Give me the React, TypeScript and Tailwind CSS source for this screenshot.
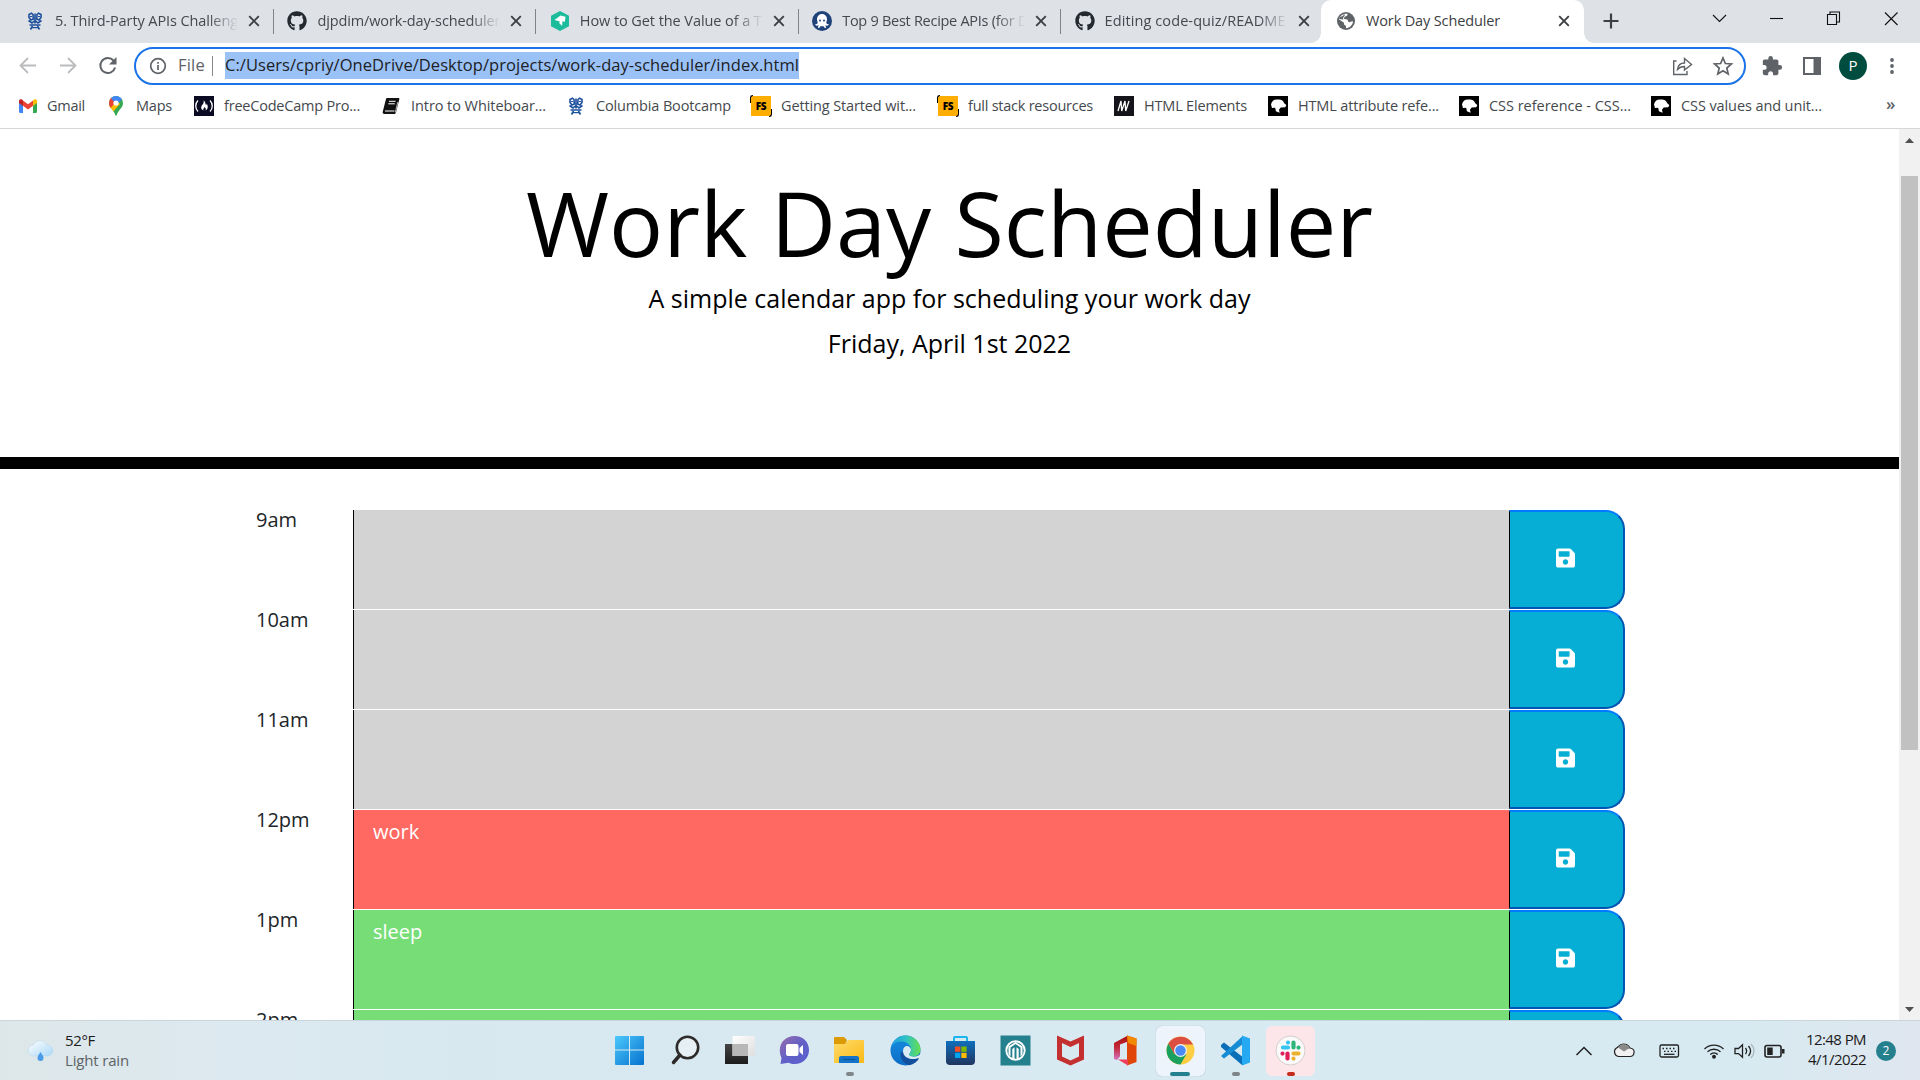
import React, { useLayoutEffect, useRef, useState } from "react";
import { FaGithub, FaSave } from "react-icons/fa";
import { MdExtension } from "react-icons/md";

/** Single line of text whose tracking is adjusted so that it fills `width` pixels. */
function Fit({ width, children, className = "" }: { width: number; children: string; className?: string }) {
  const ref = useRef<HTMLSpanElement>(null);
  const [spacing, setSpacing] = useState(0);
  useLayoutEffect(() => {
    if (ref.current) {
      const natural = ref.current.getBoundingClientRect().width;
      setSpacing((width - natural) / children.length);
    }
  }, [width, children]);
  return (
    <span ref={ref} className={"inline-block shrink-0 whitespace-pre " + className} style={{ letterSpacing: spacing + "px" }}>
      {children}
    </span>
  );
}

/* ---------- favicons ---------- */

const Crown = () => (
  <svg viewBox="0 0 16 20" className="h-5 w-4" fill="none" stroke="#1d4f9c" strokeWidth="1.6">
    <path d="M6 3.500 4.500 2.200 2 3.500v3l2 2.500 2.300-1zM10 3.500l1.500-1.300L14 3.500v3L12 9 9.700 8zM8 2.500v10M1.500 9.500 5 12 8 9.500 11 12l3.500-2.500M2.500 14h11M3.500 18.500l2-3.500M12.500 18.500l-2-3.500" />
    <path d="M3 5.500h2M11 5.500h2M5 16.700h6" strokeWidth="1.200" />
  </svg>
);
const Hexagon = () => (
  <svg viewBox="0 0 20 20" className="size-5">
    <path d="M10 0 19 4.800v10.400L10 20 1 15.200V4.800z" fill="#1bbc9b" />
    <path d="m4.500 9 6-4.500 5 1.200-.6 5-2.400-.4-.4 4.700-3-3 .8-1.500z" fill="#fff" />
  </svg>
);
const Octopus = () => (
  <svg viewBox="0 0 20 20" className="size-5">
    <circle cx="10" cy="10" r="10" fill="#1f4379" />
    <path d="M5 8a5 5 0 0 1 10 0c0 1.800-.8 2.700-.6 4 .2 1.200 1.400 1.300 2.600 1.300-.5 1.500-2.400 1.700-3.500.8l.5 2.700c-1 .5-2 0-2.200-1.500H8.200C8 16.800 7 17.300 6 16.800l.5-2.700c-1.100.9-3 .7-3.500-.8 1.200 0 2.400-.1 2.600-1.300C5.800 10.700 5 9.800 5 8z" fill="#fff" />
    <circle cx="8" cy="9.500" r="1" fill="#1f4379" />
    <circle cx="12" cy="9.500" r="1" fill="#1f4379" />
  </svg>
);
const Globe = () => (
  <svg viewBox="0 0 20 20" className="size-5">
    <circle cx="10" cy="10" r="9" fill="#5f6368" />
    <path d="M11.500 2.800c.3 1.800-.8 2.300-2 2.500-.5 1.200-1.800.8-1.600 2.300.1 1 2.700.3 3.600 1.200.7.8.3 2.200 1.700 2.400 1.300.1 1.200-1 3.800-1-.2 3.800-3.300 6.800-7 7 0-1.200.2-2.400-.8-2.900-1.200-.5-1.300-1.300-1.200-2.600L2.900 8.200C3.600 5.200 7 2.300 11.500 2.800z" fill="#fff" />
    <path d="M4.500 5.500c1.500.2 2.800-.4 3.500-2.500 1 .4.900 1.600.2 2.400-1.500.8-1.200 2-.9 3.200L3 8z" fill="#5f6368" />
  </svg>
);
const Gmail = () => (
  <svg viewBox="0 0 18 14" className="h-3.500 w-[18px]">
    <path d="M0 2v10.800c0 .7.5 1.200 1.200 1.200H4V6z" fill="#4285f4" />
    <path d="M18 2v10.800c0 .7-.5 1.200-1.200 1.200H14V6z" fill="#34a853" />
    <path d="M4 1.400V6.800L9 10.500l5-3.700V1.400L9 5.200z" fill="#ea4335" />
    <path d="M0 2v2l4 2.900V1.400L3.300.8C2 -.3 0 .5 0 2z" fill="#c5221f" />
    <path d="M18 2v2l-4 2.900V1.400l.7-.6C16-.3 18 .5 18 2z" fill="#fbbc04" />
  </svg>
);
const Pin = () => (
  <svg viewBox="0 0 14 20" className="h-5 w-[14px]">
    <defs>
      <clipPath id="pin">
        <path d="M7 0a7 7 0 0 0-7 7c0 3 1.500 4.500 3.500 7 1.500 2 2.300 3.500 2.700 5 .2 1 1.400 1 1.600 0 .4-1.500 1.200-3 2.700-5C12.500 11.500 14 10 14 7a7 7 0 0 0-7-7z" />
      </clipPath>
    </defs>
    <g clipPath="url(#pin)">
      <path d="M0 0h14v20H0z" fill="#34a853" />
      <path d="M-2 11 7 3l4 5-8 9z" fill="#fbbc04" />
      <path d="M0 2 3 1.500l4 4.500-5.500 6L-1 9z" fill="#ea4335" />
      <path d="M2 2 4-1h9l.5 3.500L8.500 8 5 6z" fill="#4285f4" />
    </g>
    <circle cx="7" cy="7" r="2.600" fill="#fff" />
  </svg>
);
const FreeCode = () => (
  <svg viewBox="0 0 20 20" className="size-5">
    <path d="M0 0h20v20H0z" fill="#0a0a23" />
    <path d="M4 4.500c-3 3-3 8 0 11M16 4.500c3 3 3 8 0 11" fill="none" stroke="#fff" strokeWidth="1.300" />
    <path d="M9.500 4.500c2.500 1.500 1.500 3.500 2.600 4.500.6-.2.600-.9.400-1.400 1.500 1.600 2.200 5.400-1 7 .7-1.500.2-2.600-1-3.600-.2 1.500-1.800 1.500-1 3.600-3.600-1.500-2.200-4.600-.9-6 .8-1 1.500-2.200.9-4.100z" fill="#fff" />
  </svg>
);
const Book = () => (
  <svg viewBox="0 0 18 18" className="size-[18px]">
    <path d="M5 1h11.500c.7 0 1 .5.8 1.200L14 15.500c-.2.900-.8 1.500-1.700 1.500H2.500C1 17 .3 15.800.8 14.500L4 2c.2-.6.500-1 1-1z" fill="#111" />
    <path d="M7 4.300h6.500M6.300 6.800h6.500M3 14h9.500" stroke="#fff" strokeWidth="1" />
    <path d="m15.800 5-2.500 10.500" stroke="#fff" strokeWidth=".7" />
  </svg>
);
const FullStack = () => (
  <div className="relative flex size-5 items-center justify-center bg-[#ffae00] text-[10px] font-extrabold tracking-[-0.4px] text-black">
    FS
    <span className="absolute -top-px -left-px h-2 w-[3px] rounded-tl-sm border-t border-l-[1.500px] border-black" />
    <span className="absolute -right-px -bottom-px h-2 w-[3px] rounded-br-sm border-r-[1.500px] border-b border-black" />
  </div>
);
const MdnM = () => (
  <svg viewBox="0 0 20 20" className="size-5">
    <path d="M0 0h20v20H0z" fill="#15141a" />
    <path d="m4 15 3-10 .7 10 3.300-10 .7 10L15 5" fill="none" stroke="#fff" strokeWidth="1.300" />
  </svg>
);
const MdnDino = () => (
  <svg viewBox="0 0 20 20" className="size-5">
    <path d="M0 0h20v20H0z" fill="#000" />
    <path d="M3 8.500C3.500 5 6.500 3 9.500 3.500c3.500-.5 6 1 6.700 3.700L18.300 9l-1 2.300-4.600.2-1.700 2.300.6 3-3.700-1.600-.7-3.400-3.200.3z" fill="#fff" />
  </svg>
);

/* ---------- browser chrome ---------- */

const tabs = [
  { title: "5. Third-Party APIs Challeng", icon: <Crown />, width: 183 },
  { title: "djpdim/work-day-scheduler", icon: <FaGithub className="size-5 text-[#24292f]" />, width: 183 },
  { title: "How to Get the Value of a T", icon: <Hexagon />, width: 182 },
  { title: "Top 9 Best Recipe APIs (for D", icon: <Octopus />, width: 186 },
  { title: "Editing code-quiz/README", icon: <FaGithub className="size-5 text-[#24292f]" />, width: 181 },
];

const Close = () => (
  <svg viewBox="0 0 12 12" className="size-3 shrink-0" stroke="#3c4043" strokeWidth="1.900">
    <path d="m1.200 1.200 9.600 9.600M10.800 1.200l-9.600 9.600" />
  </svg>
);

function TabStrip() {
  return (
    <div className="flex h-[43px] bg-[#dee1e6] text-[14.500px] text-[#45494d]">
      <div className="flex w-[1321px] pl-[12px]">
        {tabs.map((t, i) => (
          <div key={i} className="flex h-[42px] w-[262.400px] shrink-0 items-center pl-[13px]">
            <div className="flex w-5 shrink-0 justify-center">{t.icon}</div>
            <div className="ml-[10px] w-[183px] shrink-0 whitespace-nowrap [mask-image:linear-gradient(to_right,black_84%,transparent)]">
              <Fit width={t.width}>{t.title}</Fit>
            </div>
            <div className="ml-[10px]"><Close /></div>
            {i < 4 && <div className="ml-[13px] h-[25px] w-px bg-[#808387]" />}
          </div>
        ))}
      </div>
      <div className="relative flex w-[263px] items-center rounded-t-[10px] bg-white pr-[14px] pb-px pl-[15px] text-[#3c4043]">
        <span className="absolute bottom-0 -left-[10px] size-[10px] bg-[radial-gradient(circle_at_0_0,transparent_9.500px,white_10px)]" />
        <span className="absolute -right-[10px] bottom-0 size-[10px] bg-[radial-gradient(circle_at_100%_0,transparent_9.500px,white_10px)]" />
        <Globe />
        <Fit width={134} className="ml-[10px]">Work Day Scheduler</Fit>
        <div className="ml-auto"><Close /></div>
      </div>
      <div className="flex flex-1 items-start">
        <svg viewBox="0 0 336 43" className="h-[43px] w-[336px]" fill="none" stroke="#111" strokeWidth="1.100">
          <path d="M27 13.500v15M19.500 21h15" stroke="#3c4043" strokeWidth="2.200" />
          <path d="m129 15 6.500 6.500L142 15" />
          <path d="M186 18.500h13" />
          <path d="M243.500 14.500h9v10h-9zM246 14v-2h9.500v10H253" />
          <path d="m301 12.500 12.500 12.500M313.500 12.500 301 25" />
        </svg>
      </div>
    </div>
  );
}

function Toolbar() {
  return (
    <div className="flex h-[45px] items-center bg-white text-[16.500px]">
      <svg viewBox="0 0 134 45" className="h-[45px] w-[134px] shrink-0" fill="none" strokeWidth="1.800">
        <path d="M36 22.500H20.500M28 15l-7.500 7.500L28 30" stroke="#babcbe" />
        <path d="M60 22.500h15.500M68 15l7.500 7.500L68 30" stroke="#babcbe" />
        <path d="M113.500 17.500a7.500 7.500 0 1 0 1.600 7" stroke="#5f6368" strokeWidth="2" />
        <path d="M116.500 14v7.500H109z" fill="#5f6368" />
      </svg>
      <div className="flex h-[38px] w-[1612px] shrink-0 items-center rounded-full border-[2.500px] border-[#1a73e8] pl-[13px] text-[#202124]">
        <svg viewBox="0 0 18 18" className="size-[18px]" fill="none" stroke="#5f6368" strokeWidth="1.700">
          <circle cx="9" cy="9" r="7.300" />
          <path d="M9 8v5M9 5v1.800" />
        </svg>
        <Fit width={27} className="ml-[11px] text-[#5f6368]">File</Fit>
        <div className="ml-[7px] h-5 w-px bg-[#85888c]" />
        <div className="ml-[12px] flex h-[27px] items-center bg-[#9ac2f7]">
          <Fit width={574}>C:/Users/cpriy/OneDrive/Desktop/projects/work-day-scheduler/index.html</Fit>
        </div>
        <svg viewBox="0 0 72 24" className="mr-[3px] ml-auto h-6 w-[72px]" fill="none" stroke="#5f6368" strokeWidth="1.400">
          <path d="M7.500 7H4.700v13.500H18V17" />
          <path d="M8.500 15.500c.5-4.500 3.500-6.500 7-6.500V4.500l7 6-7 5.500v-3.500c-3 0-5 .8-7 3z" />
          <path d="m54 4 2.400 5.500 6 .5-4.600 4 1.400 6-5.200-3.200L48.800 20l1.400-6-4.600-4 6-.5z" strokeWidth="1.700" />
        </svg>
      </div>
      <div className="flex flex-1 items-center text-[#5f6368]">
        <MdExtension className="ml-[15px] size-[22px]" />
        <svg viewBox="0 0 18 18" className="ml-[20px] size-[18px]">
          <path d="M1 1h16v16H1z" fill="none" stroke="#5f6368" strokeWidth="2" />
          <path d="M10.500 1H17v16h-6.500z" fill="#5f6368" />
        </svg>
        <div className="ml-[18px] flex size-7 items-center justify-center rounded-full bg-[#004d40] text-[15px] text-white">P</div>
        <svg viewBox="0 0 4 18" className="ml-[23px] h-[18px] w-1" fill="#5f6368">
          <circle cx="2" cy="3" r="1.900" /><circle cx="2" cy="9" r="1.900" /><circle cx="2" cy="15" r="1.900" />
        </svg>
      </div>
    </div>
  );
}

const bookmarks = [
  { box: "w-[90px]", icon: <Gmail />, gap: "ml-[10px]", text: "Gmail", width: 38 },
  { box: "w-[85px]", icon: <Pin />, gap: "ml-[13px]", text: "Maps", width: 36 },
  { box: "w-[188px]", icon: <FreeCode />, gap: "ml-[10px]", text: "freeCodeCamp Pro...", width: 136 },
  { box: "w-[186px]", icon: <Book />, gap: "ml-[11px]", text: "Intro to Whiteboar...", width: 135 },
  { box: "w-[183px]", icon: <Crown />, gap: "ml-[12px]", text: "Columbia Bootcamp", width: 135 },
  { box: "w-[187px]", icon: <FullStack />, gap: "ml-[10px]", text: "Getting Started wit...", width: 135 },
  { box: "w-[176px]", icon: <FullStack />, gap: "ml-[10px]", text: "full stack resources", width: 125 },
  { box: "w-[154px]", icon: <MdnM />, gap: "ml-[10px]", text: "HTML Elements", width: 103 },
  { box: "w-[191px]", icon: <MdnDino />, gap: "ml-[10px]", text: "HTML attribute refe...", width: 141 },
  { box: "w-[192px]", icon: <MdnDino />, gap: "ml-[10px]", text: "CSS reference - CSS...", width: 142 },
  { box: "w-[235px]", icon: <MdnDino />, gap: "ml-[10px]", text: "CSS values and unit...", width: 141 },
];

function Bookmarks() {
  return (
    <div className="flex h-[41px] items-center border-b border-[#d5d7da] bg-white pb-[4px] pl-[19px] text-[14.500px] text-[#45494d]">
      {bookmarks.map((b, i) => (
        <div key={i} className={"flex shrink-0 items-center " + b.box}>
          {b.icon}
          <Fit width={b.width} className={b.gap}>{b.text}</Fit>
        </div>
      ))}
      <span className="pb-1 text-[17px] font-semibold text-[#5f6368]">»</span>
    </div>
  );
}

/* ---------- page ---------- */

const hours = [
  { time: "9am", text: "", color: "bg-[#d3d3d3]" },
  { time: "10am", text: "", color: "bg-[#d3d3d3]" },
  { time: "11am", text: "", color: "bg-[#d3d3d3]" },
  { time: "12pm", text: "work", color: "bg-[#ff6961]" },
  { time: "1pm", text: "sleep", color: "bg-[#77dd77]" },
  { time: "2pm", text: "", color: "bg-[#77dd77]" },
];

function Page() {
  return (
    <div className="flex h-[891px] overflow-hidden bg-white">
      <main className="w-[1899px] shrink-0">
        <header className="h-[340px] border-b-[12px] border-black pt-[39px] text-center text-black">
          <h1 className="text-[90px] leading-[108px]">Work Day Scheduler</h1>
          <p className="mt-[3px] text-[25px] leading-[38px]">A simple calendar app for scheduling your work day</p>
          <p className="mt-[7px] text-[25px] leading-[38px]">Friday, April 1st 2022</p>
        </header>
        <section className="pt-[41px] pl-[256px] text-[20px] text-[#212529]">
          {hours.map((h) => (
            <div key={h.time} className="mb-px flex h-[99px]">
              <div className="w-[97px] leading-[20px]">{h.time}</div>
              <div className={"w-[1156px] border-l border-black pt-[7px] pl-[19px] leading-[30px] text-white " + h.color}>{h.text}</div>
              <button className="flex w-[116px] items-center justify-center rounded-r-[19px] border-2 border-l border-t-[#007bff] border-r-[#0056b3] border-b-[#0056b3] border-l-black bg-[#06aed5] pb-[3px] text-white">
                <FaSave className="mr-[2px] h-[22px] w-[19px]" />
              </button>
            </div>
          ))}
        </section>
      </main>
      <div className="flex w-[21px] flex-col items-center bg-[#f1f1f1]">
        <svg viewBox="0 0 21 47" className="h-[47px] w-[21px] shrink-0"><path d="m6 14 4.500-5 4.500 5z" fill="#505050" /></svg>
        <div className="h-[574px] w-[17px] shrink-0 bg-[#c1c1c1]" />
        <svg viewBox="0 0 21 21" className="mt-auto h-[21px] w-[21px] shrink-0"><path d="m6 8 4.500 5L15 8z" fill="#505050" /></svg>
      </div>
    </div>
  );
}

/* ---------- taskbar ---------- */

const appIcons: { box: string; dot?: string; art: React.ReactNode }[] = [
  { box: "", art: (
    <g fill="url(#win)"><path d="M1 2q0-1 1-1h13v13.500H1zM16 1h13q1 0 1 1v12.500H16zM1 15.500h14V30H2q-1 0-1-1zM16 15.500h14V29q0 1-1 1H16z" /></g>) },
  { box: "", art: (
    <g fill="none" stroke="#2d2a29"><circle cx="18.500" cy="12.500" r="10.700" fill="#e6eff3" strokeWidth="2.600" /><path d="m11 20-6.500 7.500" strokeWidth="3.500" strokeLinecap="round" /></g>) },
  { box: "", art: (
    <g><path d="M1 9h23v20H1z" fill="url(#dark)" /><path d="M8.500 1H31v20H8.500z" fill="url(#pale)" /><path d="M8.500 9H24v12H8.500z" fill="#b7b7b7" /></g>) },
  { box: "", art: (
    <g><path d="M15.500 1C24 1 30 7 30 15s-6 14-14.500 14c-2.500 0-4-.5-6-1.300L1.500 29l1-6C-2.500 12 4 1 15.500 1z" fill="url(#chat)" /><rect x="7" y="9" width="12.500" height="12" rx="2" fill="#fff" /><path d="m20.500 13 3.500-3v10l-3.500-3z" fill="#fff" /></g>) },
  { box: "", dot: "w-2 bg-[#7f868a]", art: (
    <g><path d="M0 3q0-1 1-1h9l3 3-2 5H0z" fill="#dc9b05" /><path d="M0 9h11l3-4h15q1 0 1 1v22H0z" fill="url(#folder)" /><path d="M5 28v-5q0-2 2-2h16q2 0 2 2v5z" fill="#1373c8" /><path d="M9 24.500h12" stroke="#0b559d" strokeWidth="1.200" /></g>) },
  { box: "", art: (
    <g>
      <circle cx="15.500" cy="15.500" r="15" fill="url(#edge)" />
      <path d="M11 17c-1.500 5 1.500 11 8 13.200C24 29.500 28 26 29.200 22.800c-.4-.7-1.200-.4-2 0C20 25.500 14.500 22 13.500 17z" fill="#124f9c" />
      <path d="M13 15.500c.3-3 2-4.500 4-4.500s4 1.700 4 4c0 2.500-1.500 3-1.500 4.300 0 1.700 3 2.200 5 2.200 2.500 0 4.500-1 6.500-2.500l1 2.500-2.500 2.500c-.5-1-1.500-1-2.500-.6C20 25.500 12.700 22 13 15.500z" fill="#d9eaf3" />
      <path d="M1 12C4 3.500 10 .5 15.500.5 24 .5 30.500 7 30.500 14.500c0 4.500-3.500 7-7.500 7-2.500 0-4-.8-4-2s2-2 2-5C21 10 16.500 6.500 11 6.500 6 6.500 2.500 9.500 1 12z" fill="url(#edgetop)" />
    </g>) },
  { box: "", art: (
    <g><path d="M9 7V3q0-1 1-1h11q1 0 1 1v4" fill="none" stroke="#19b5ee" strokeWidth="2" /><path d="M1 6h29v20q0 4-4 4H5q-4 0-4-4z" fill="url(#store)" /><path d="M10 11.500h5.300v5.300H10z" fill="#f25022" /><path d="M16.300 11.500h5.300v5.300h-5.300z" fill="#7fba00" /><path d="M10 17.800h5.300V23H10z" fill="#00a4ef" /><path d="M16.300 17.800h5.300V23h-5.300z" fill="#ffb900" /></g>) },
  { box: "", art: (
    <g><path d="M.5.500h30v30H.5z" fill="#25808d" /><circle cx="15.500" cy="15.500" r="9.200" fill="none" stroke="#fff" strokeWidth="1.900" /><path d="M8.500 11.500 15.500 7l7 4.500v8l-2 2V12.500L15.500 9l-5 3.500v9l-2-2zM12.300 14l2.200-1.700V24h-2.200zM16.500 12.300l2.200 1.700v10h-2.200z" fill="#fff" /></g>) },
  { box: "", art: (
    <path d="m2 .5 13.500 6L29 .5v24l-13.500 6L2 24.500zm5 7.500v13.500l8.500 4 8.500-4V8l-8.500 4z" fill="#c42f2f" fillRule="evenodd" />) },
  { box: "", art: (
    <g><path d="M4 8 18 .5v6L10 9.500v12l-3 3.500-3-1z" fill="url(#office)" /><path d="m17 .5 9.500 3v23.500l-9.500 3.500z" fill="#e0460a" /><path d="m17 .5 9.500 3V11L18 8z" fill="#f28900" /><path d="M8 24.500h10v6z" fill="#ef3e5b" /></g>) },
  { box: "rounded-md bg-[#edf4fb] shadow-[0_0_1px_#9ab]", dot: "w-5 bg-[#25808d]", art: (
    <g><circle cx="15.500" cy="15.500" r="14" fill="#ffce43" /><path d="M3.400 8.500A14 14 0 0 0 15.500 29.500l6-10.500H9.500z" fill="#1aa15f" /><path d="M3.400 8.500A14 14 0 0 1 28 9.500H15.500L9.400 19z" fill="#dd4f43" /><circle cx="15.500" cy="15.500" r="6.500" fill="#f1f1f1" /><circle cx="15.500" cy="15.500" r="5.200" fill="#4b8bf5" /></g>) },
  { box: "", dot: "w-2 bg-[#7f868a]", art: (
    <g><path d="M1 10 4 7.500 24 23v7L22 30 1 12z" fill="#0a6fb8" /><path d="M1 21 23 .8V9L4 23.500 1 21z" fill="#168cd4" /><path d="m22 .5 8 3v24l-8 3z" fill="#24a9f2" /></g>) },
  { box: "rounded-md bg-[#fde6e9]", dot: "w-2 bg-[#c42b1c]", art: (
    <g><circle cx="15.500" cy="15.500" r="14.500" fill="#fbfafa" stroke="#c9c3c4" strokeWidth=".8" /><g strokeWidth="4.200" strokeLinecap="round"><path d="M8 12.500h5M13 7.500v.1" stroke="#36c5f0" /><path d="M18.500 7.500v5M23.500 12.500v.1" stroke="#2eb67d" /><path d="M18.500 18.500h5M18.500 23.500v.1" stroke="#ecb22e" /><path d="M12.500 18.500v5M7.500 18.500v.1" stroke="#e01e5a" /></g></g>) },
];

function Gradients() {
  return (
    <svg className="absolute size-0">
      <defs>
        <linearGradient id="win" x1="0" y1="0" x2="1" y2="1"><stop stopColor="#4cc9fb" /><stop offset="1" stopColor="#0571cf" /></linearGradient>
        <linearGradient id="dark" x1="0" y1="0" x2="0" y2="1"><stop stopColor="#444" /><stop offset="1" stopColor="#1c1c1c" /></linearGradient>
        <linearGradient id="pale" x1="0" y1="0" x2="1" y2="1"><stop stopColor="#fff" /><stop offset="1" stopColor="#dedede" /></linearGradient>
        <linearGradient id="chat" x1="0" y1="0" x2="1" y2="1"><stop stopColor="#9a6cab" /><stop offset=".5" stopColor="#6260c6" /><stop offset="1" stopColor="#5a5fd0" /></linearGradient>
        <linearGradient id="folder" x1="0" y1="0" x2="1" y2="1"><stop stopColor="#ffdb6b" /><stop offset="1" stopColor="#fbb915" /></linearGradient>
        <linearGradient id="edge" x1="0" y1="0" x2="0" y2="1"><stop offset=".3" stopColor="#1484d8" /><stop offset="1" stopColor="#0c6cc6" /></linearGradient>
        <linearGradient id="edgetop"><stop stopColor="#229fe0" /><stop offset=".5" stopColor="#2dc0c6" /><stop offset="1" stopColor="#66e04e" /></linearGradient>
        <linearGradient id="store" x1="0" y1="0" x2="0" y2="1"><stop stopColor="#0f6fbd" /><stop offset="1" stopColor="#20355f" /></linearGradient>
        <linearGradient id="office" x1="0" y1="0" x2="0" y2="1"><stop stopColor="#a80d0d" /><stop offset=".5" stopColor="#c32b3c" /><stop offset="1" stopColor="#d574c4" /></linearGradient>
        <linearGradient id="cloud" x1="0" y1="0" x2="1" y2="1"><stop stopColor="#fff" /><stop offset="1" stopColor="#a9d8f7" /></linearGradient>
      </defs>
    </svg>
  );
}

function Taskbar() {
  return (
    <footer className="flex h-[60px] items-center border-t border-[#c9d6dd] bg-[linear-gradient(90deg,#dde7e9_0%,#dde9f0_12%,#d7e8ef_24%,#d8e9f2_50%,#d7eaf1_90%,#dfe6ef_100%)] text-[15px] text-[#1b1b1b]">
      <div className="flex w-[602px] shrink-0 items-center pl-[27px]">
        <svg viewBox="0 0 28 22" className="h-[22px] w-7">
          <path d="M7 16a5.500 5.500 0 0 1-.5-11A7.500 7.500 0 0 1 20 5a5.500 5.500 0 0 1 1 11z" fill="url(#cloud)" stroke="#b9d5e6" strokeWidth=".5" />
          <path d="M13.500 12c2 3 3 4.500 3 6a3 3 0 0 1-6 0c0-1.500 1-3 3-6z" fill="#4a9be8" />
        </svg>
        <div className="-mt-[2px] ml-[10px] flex flex-col items-start leading-5">
          <Fit width={30}>52°F</Fit>
          <Fit width={64} className="text-[#5c6366]">Light rain</Fit>
        </div>
      </div>
      <div className="flex shrink-0">
        {appIcons.map((a, i) => (
          <div key={i} className="flex w-[55.100px] justify-center">
            <div className={"relative flex h-[50px] w-[49px] items-center justify-center " + a.box}>
              <svg viewBox="0 0 31 31" className="size-[31px]">{a.art}</svg>
              {a.dot && <span className={"absolute bottom-0 h-1 rounded-full " + a.dot} />}
            </div>
          </div>
        ))}
      </div>
      <div className="ml-auto flex items-center pr-[24px]">
        <svg viewBox="0 0 220 30" className="h-[30px] w-[220px]" fill="none" stroke="#222" strokeWidth="1.300">
          <path d="m6.500 19 7.500-7.500 7.500 7.500" strokeWidth="1.500" />
          <path d="M48.500 20.500a4.700 4.700 0 0 1-2-8.500c2-1 2.500-4 7-4 4 0 5.500 2 6.500 4 3.500.5 4.500 2.500 4 5-.3 2-1.500 3.500-4 3.500z" fill="#f1f1f1" strokeWidth="1.200" />
          <path d="M48 11.500C51 7 58 7 60 12.500c-3 .5-4 2-6 3z" fill="#8a8a8a" stroke="none" />
          <rect x="90" y="9" width="18.500" height="12" rx="1.500" />
          <path d="M92.500 12.500h14M94 15.300h12" strokeDasharray="1.500 2" />
          <path d="M94 18.300h10.500" />
          <path d="M134.500 13a13.500 13.500 0 0 1 19 0M137.500 15.800a9.500 9.500 0 0 1 13 0M140.300 18.500a5.500 5.500 0 0 1 7.500 0" />
          <circle cx="144" cy="20.700" r="1.300" fill="#222" />
          <path d="M165 12.500h3.500l4-3.700v12.500l-4-3.700H165zM175.500 12c1.500 2 1.500 4 0 6M178.500 10c2.500 3 2.500 7 0 10" />
          <path d="M181 8c4 4 4 10 0 14" stroke="#aab7bd" />
          <rect x="195" y="9.500" width="16" height="11.500" rx="2" strokeWidth="1.600" />
          <path d="M197.200 11.500h5.500v7.500h-5.500zM212 13h2.500v4.500H212z" fill="#222" stroke="none" />
        </svg>
        <div className="-mt-[4px] ml-4 flex w-[60px] flex-col items-end leading-5">
          <Fit width={60}>12:48 PM</Fit>
          <Fit width={58}>4/1/2022</Fit>
        </div>
        <div className="ml-[10px] flex size-5 items-center justify-center rounded-full bg-[#25808d] text-[12px] text-white">2</div>
      </div>
    </footer>
  );
}

export default function App() {
  return (
    <div className="relative h-[1080px] w-[1920px] overflow-hidden bg-white font-['Open_Sans','Noto_Sans',sans-serif]">
      <Gradients />
      <TabStrip />
      <Toolbar />
      <Bookmarks />
      <Page />
      <Taskbar />
    </div>
  );
}
